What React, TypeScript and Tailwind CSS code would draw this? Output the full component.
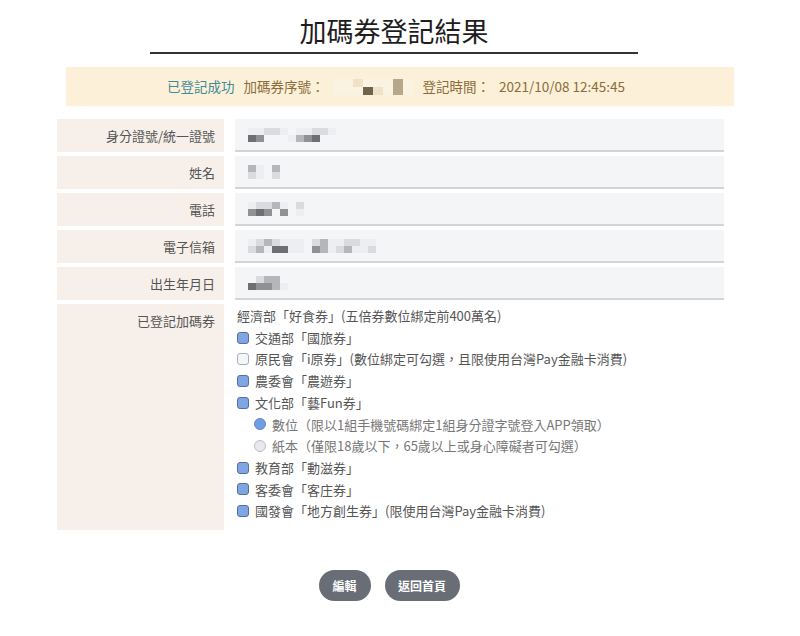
import React from "react";

const font = { fontFamily: '"Noto Sans CJK TC", "Noto Sans", sans-serif' };

// blurred personal data, drawn as a pixel mosaic
const shades: Record<string, string> = {
  ".": "bg-transparent",
  a: "bg-[#eceef1]",
  b: "bg-[#d9dbdf]",
  c: "bg-[#b4b6ba]",
  d: "bg-[#8f9195]",
  e: "bg-[#6d6f73]",
  f: "bg-[#fbf3e2]",
  g: "bg-[#efe2c6]",
  h: "bg-[#b8a88a]",
  i: "bg-[#6f6450]",
};

function Mosaic({ rows, cell = "h-[7px] w-[8px]" }: { rows: string[]; cell?: string }) {
  return (
    <div className="flex flex-col">
      {rows.map((r, i) => (
        <div key={i} className="flex">
          {r.split("").map((ch, j) => (
            <span key={j} className={`${cell} ${shades[ch]}`} />
          ))}
        </div>
      ))}
    </div>
  );
}

const fields = [
  { label: "身分證號/統一證號", rows: ["aabba.aabba", "ed...acde"] },
  { label: "姓名", rows: ["ca.c", "ba.b"] },
  { label: "電話", rows: ["abbca.b", "ded.d.a"] },
  { label: "電子信箱", rows: ["abcbaaa.bcaabbaa", "bcaeeaa.dcabcaab"] },
  { label: "出生年月日", rows: [".bcc.", "eddca"] },
];

type Item = { text: string; kind: "plain" | "check" | "uncheck" | "radio" | "radioOff" };

const items: Item[] = [
  { text: "經濟部「好食券」(五倍券數位綁定前400萬名)", kind: "plain" },
  { text: "交通部「國旅券」", kind: "check" },
  { text: "原民會「i原券」(數位綁定可勾選，且限使用台灣Pay金融卡消費)", kind: "uncheck" },
  { text: "農委會「農遊券」", kind: "check" },
  { text: "文化部「藝Fun券」", kind: "check" },
  { text: "數位（限以1組手機號碼綁定1組身分證字號登入APP領取）", kind: "radio" },
  { text: "紙本（僅限18歲以下，65歲以上或身心障礙者可勾選）", kind: "radioOff" },
  { text: "教育部「動滋券」", kind: "check" },
  { text: "客委會「客庄券」", kind: "check" },
  { text: "國發會「地方創生券」(限使用台灣Pay金融卡消費)", kind: "check" },
];

function Mark({ kind }: { kind: Item["kind"] }) {
  if (kind === "check")
    return <span className="mr-[6px] inline-block h-[12px] w-[12px] rounded-[3px] border border-[#5a6f96] bg-[#7fa6e4]" />;
  if (kind === "uncheck")
    return <span className="mr-[6px] inline-block h-[12px] w-[12px] rounded-[3px] border border-[#a9b0bb] bg-[#f3f5f8]" />;
  if (kind === "radio")
    return <span className="mr-[6px] inline-block h-[12px] w-[12px] rounded-full border border-[#6c86b5] bg-[#6f9ee8]" />;
  if (kind === "radioOff")
    return <span className="mr-[6px] inline-block h-[12px] w-[12px] rounded-full border border-[#b9bec6] bg-[#e7e9ed]" />;
  return null;
}

export default function App() {
  return (
    <div className="min-h-[636px] w-[800px] bg-white" style={font}>
      <div className="flex flex-col items-center pr-[12px] pt-[14px]">
        <h1 className="text-[27px] leading-[34px] font-normal text-[#1e1e1e]">加碼券登記結果</h1>
        <div className="mt-[4px] h-[2px] w-[488px] bg-[#333]" />
      </div>

      <div className="mx-[66px] mt-[13px] flex h-[39px] items-center justify-center gap-[9px] bg-[#fcf0d8] pr-[8px] text-[13.5px] text-[#8a6d3b]">
        <span className="text-[#3f8a99]">已登記成功</span>
        <span>加碼券序號：</span>
        <Mosaic rows={["ffgfffhf", "fffigfhf"]} cell="h-[8px] w-[10px]" />
        <span>登記時間：</span>
        <span>2021/10/08 12:45:45</span>
      </div>

      <div className="ml-[57px] mr-[76px] mt-[13px] flex flex-col gap-[4px] text-[13px] text-[#555]">
        {fields.map((f) => (
          <div key={f.label} className="flex h-[33px] gap-[11px]">
            <div className="flex w-[167px] items-center justify-end bg-[#f7f0ea] pr-[9px]">{f.label}</div>
            <div className="flex flex-1 items-center border-b-2 border-[#d2d4d8] bg-[#f4f5f7] pl-[13px]">
              <Mosaic rows={f.rows} />
            </div>
          </div>
        ))}
        <div className="flex gap-[11px]">
          <div className="h-[226px] w-[167px] bg-[#f7f0ea] pr-[9px] pt-[7px] text-right">已登記加碼券</div>
          <div className="flex flex-1 flex-col pl-[2px] pt-[1px] text-[#555]">
            {items.map((it) => (
              <div
                key={it.text}
                className={`flex h-[21.7px] items-center ${it.kind === "radio" || it.kind === "radioOff" ? "pl-[17px] text-[#777]" : ""}`}
              >
                <Mark kind={it.kind} />
                <span>{it.text}</span>
              </div>
            ))}
          </div>
        </div>
      </div>

      <div className="mt-[40px] flex justify-center gap-[14px] pr-[22px]">
        <button className="h-[31px] w-[52px] rounded-full bg-[#686d76] text-[12px] font-bold text-white">編輯</button>
        <button className="h-[31px] w-[75px] rounded-full bg-[#686d76] text-[12px] font-bold text-white">返回首頁</button>
      </div>
    </div>
  );
}
